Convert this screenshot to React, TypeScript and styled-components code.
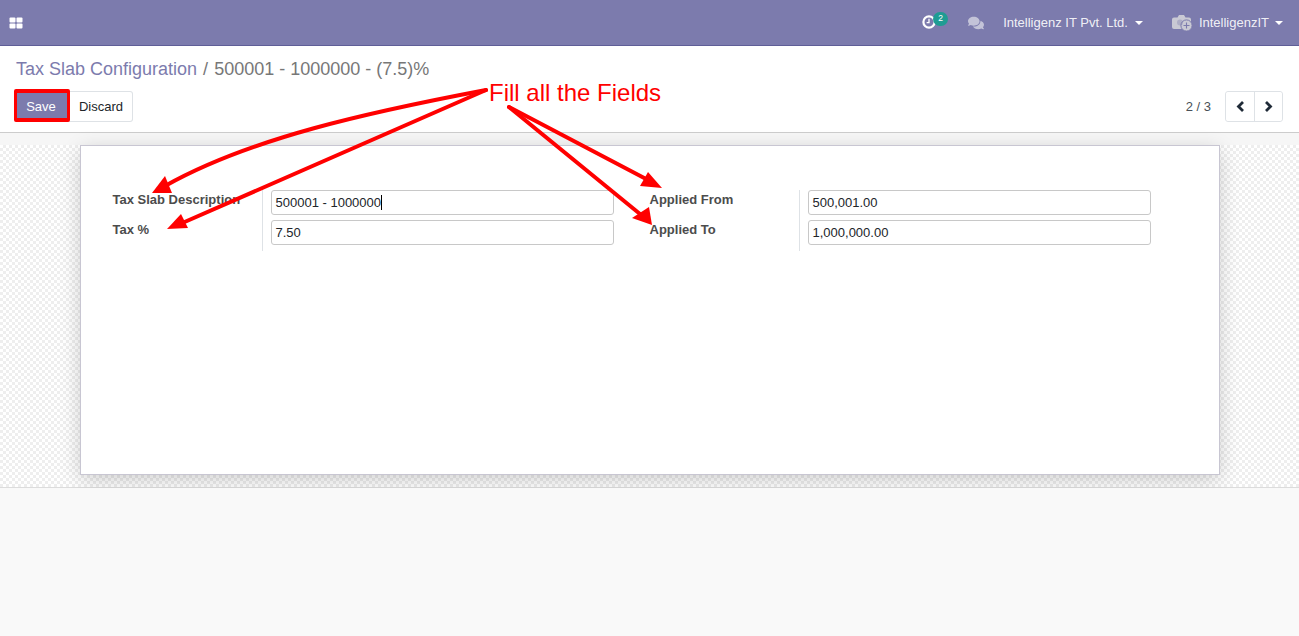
import React from 'react'
import styled, { createGlobalStyle } from 'styled-components'
import { FaComments } from 'react-icons/fa'

const App = () => {
  return (
    <Page>
      <GlobalStyle />
      <Navbar>
        <AppsIcon><GridIcon /></AppsIcon>
        <NavRight>
          <Activity>
            <ClockIcon />
            <Badge>2</Badge>
          </Activity>
          <ChatIcon><FaComments /></ChatIcon>
          <NavItem>Intelligenz IT Pvt. Ltd.<Caret /></NavItem>
          <UserItem>
            <CameraIcon />
            <UserName>IntelligenzIT</UserName>
            <Caret />
          </UserItem>
        </NavRight>
      </Navbar>

      <ControlPanel>
        <Breadcrumb>
          <BreadcrumbLink>Tax Slab Configuration</BreadcrumbLink>
          <BreadcrumbSep>/</BreadcrumbSep>
          <span>500001 - 1000000 - (7.5)%</span>
        </Breadcrumb>
        <ActionRow>
          <Buttons>
            <PrimaryButton>Save</PrimaryButton>
            <SecondaryButton>Discard</SecondaryButton>
          </Buttons>
          <Pager>
            <PagerText>2 / 3</PagerText>
            <PagerGroup>
              <PagerButton><Chevron d="M7 1 2.5 5.5 7 10" /></PagerButton>
              <PagerButton><Chevron d="M2 1l4.5 4.5L2 10" /></PagerButton>
            </PagerGroup>
          </Pager>
        </ActionRow>
      </ControlPanel>

      <FormArea>
        <Sheet>
          <FormGroup>
            <FieldColumn>
              <FieldLabels>
                <FieldLabel>Tax Slab Description</FieldLabel>
                <FieldLabel>Tax %</FieldLabel>
              </FieldLabels>
              <FieldInputs>
                <FieldInput>500001 - 1000000<TextCursor /></FieldInput>
                <FieldInput>7.50</FieldInput>
              </FieldInputs>
            </FieldColumn>
            <FieldColumn>
              <FieldLabels>
                <FieldLabel>Applied From</FieldLabel>
                <FieldLabel>Applied To</FieldLabel>
              </FieldLabels>
              <FieldInputs>
                <FieldInput>500,001.00</FieldInput>
                <FieldInput>1,000,000.00</FieldInput>
              </FieldInputs>
            </FieldColumn>
          </FormGroup>
        </Sheet>
      </FormArea>
      <Chatter />

      <SaveHighlight />
      <AnnotationText>Fill all the Fields</AnnotationText>
      <Arrows viewBox="0 0 1299 636">
        <ArrowLine d="M486 90 C 370 112, 250 138, 165 186" />
        <ArrowHead points="152,193 165,176 172,193" />
        <ArrowLine d="M486 90 L 180 224" />
        <ArrowHead points="167,229 181,214 188,228" />
        <ArrowLine d="M509 107 L 648 180" />
        <ArrowHead points="662,188 648,172 640,186" />
        <ArrowLine d="M509 107 L 640 214" />
        <ArrowHead points="652,225 649,207 632,218" />
      </Arrows>
    </Page>
  )
}

export default App

const GridIcon = () => (
  <svg width="14" height="12" viewBox="0 0 14 12" fill="#fff">
    <rect x="0.5" y="0.5" width="6" height="5" rx="1" />
    <rect x="7.5" y="0.5" width="6" height="5" rx="1" />
    <rect x="0.5" y="6.5" width="6" height="5" rx="1" />
    <rect x="7.5" y="6.5" width="6" height="5" rx="1" />
  </svg>
)

const ClockIcon = () => (
  <svg width="14" height="14" viewBox="0 0 14 14" fill="none">
    <circle cx="7" cy="7" r="5.6" stroke="#fff" strokeWidth="2.2" />
    <path d="M7 3.8V7.6H4.6" stroke="#fff" strokeWidth="1.3" />
  </svg>
)

const CameraIcon = () => (
  <svg width="21" height="18" viewBox="0 0 21 18">
    <path d="M2 3.5h3.5L7 1h5l1.5 2.5H17a2 2 0 0 1 2 2V13a2 2 0 0 1-2 2H2a2 2 0 0 1-2-2V5.5a2 2 0 0 1 2-2z" fill="#c9c9d4" />
    <circle cx="14.5" cy="11.5" r="5.6" fill="#c9c9d4" stroke="#7C7BAD" strokeWidth="1" />
    <path d="M14.5 8.5v6M11.5 11.5h6" stroke="#7C7BAD" strokeWidth="1.1" />
    <circle cx="8" cy="8.5" r="3" fill="#7C7BAD" opacity="0.35" />
  </svg>
)

const Chevron = ({ d }: { d: string }) => (
  <svg width="9" height="11" viewBox="0 0 9 11" fill="none">
    <path d={d} stroke="#1f2a37" strokeWidth="2.8" />
  </svg>
)

const GlobalStyle = createGlobalStyle`
  html, body, #root {
    margin: 0;
    height: 100%;
  }
  body {
    font-family: "Liberation Sans", Arial, sans-serif;
    font-size: 13px;
    color: #212529;
    background: #f9f9f9;
  }
  * {
    box-sizing: border-box;
  }
`

const Page = styled.div`
  position: relative;
  height: 636px;
  overflow: hidden;
  display: flex;
  flex-direction: column;
`

const Navbar = styled.header`
  height: 46px;
  flex: none;
  background: #7c7bad;
  border-bottom: 1px solid #5f5e97;
  display: flex;
  align-items: center;
  justify-content: space-between;
  padding: 0 16px 0 9px;
  color: #fff;
`

const AppsIcon = styled.div`
  display: flex;
  align-items: center;
`

const NavRight = styled.div`
  display: flex;
  align-items: center;
  color: rgba(255, 255, 255, 0.9);
`

const Activity = styled.div`
  position: relative;
  display: flex;
  width: 14px;
  height: 14px;
  margin: -2px 32px 0 0;
`

const Badge = styled.span`
  position: absolute;
  left: 11px;
  top: -3px;
  width: 15px;
  height: 14px;
  border-radius: 7px;
  background: #1f9c93;
  color: #fff;
  font-size: 8.5px;
  line-height: 13px;
  text-align: center;
`

const ChatIcon = styled.div`
  display: flex;
  color: #c3c3d8;
  font-size: 16px;
  margin-right: 19px;
`

const NavItem = styled.div`
  display: flex;
  align-items: center;
  margin-right: 29px;
`

const UserItem = styled.div`
  display: flex;
  align-items: center;
`

const UserName = styled.span`
  margin: 0 -1px 0 6px;
`

const Caret = styled.i`
  display: inline-block;
  margin-left: 7px;
  border-top: 4px solid #fff;
  border-left: 4px solid transparent;
  border-right: 4px solid transparent;
`

const ControlPanel = styled.section`
  height: 87px;
  flex: none;
  background: #fff;
  border-bottom: 1px solid #ccc;
  padding: 10px 16px 0;
`

const Breadcrumb = styled.div`
  font-size: 18px;
  line-height: 26px;
  color: #777;
  display: flex;
`

const BreadcrumbLink = styled.span`
  color: #7c7bad;
`

const BreadcrumbSep = styled.span`
  margin: 0 6px 0 6px;
`

const ActionRow = styled.div`
  display: flex;
  align-items: center;
  justify-content: space-between;
  margin-top: 9px;
`

const Buttons = styled.div`
  display: flex;
`

const PrimaryButton = styled.button`
  width: 52px;
  height: 31px;
  border: 1px solid #7c7bad;
  border-radius: 3px 0 0 3px;
  background: #7c7bad;
  color: #fff;
  font: 13px "Liberation Sans", Arial, sans-serif;
  padding: 0 2px 0 0;
`

const SecondaryButton = styled.button`
  width: 65px;
  height: 31px;
  border: 1px solid #dee2e6;
  border-left: none;
  border-radius: 0 3px 3px 0;
  background: #fff;
  color: #212529;
  font: 13px "Liberation Sans", Arial, sans-serif;
  padding: 0 0 0 2px;
`

const Pager = styled.div`
  display: flex;
  align-items: center;
`

const PagerText = styled.span`
  color: #495057;
  margin-right: 14px;
`

const PagerGroup = styled.div`
  display: flex;
  height: 31px;
  border: 1px solid #dee2e6;
  border-radius: 3px;
`

const PagerButton = styled.button`
  width: 28px;
  border: none;
  background: #fff;
  padding: 0;
  display: flex;
  align-items: center;
  justify-content: center;
  border-radius: 3px;

  & + & {
    border-left: 1px solid #dee2e6;
    border-radius: 0 3px 3px 0;
  }
`

const FormArea = styled.main`
  height: 355px;
  flex: none;
  border-bottom: 1px solid #dcdcdc;
  padding-top: 12px;
  background-color: #fff;
  background-image:
    linear-gradient(#f6f6f6, #f6f6f6),
    conic-gradient(#eeeeee 25%, #fff 0 50%, #eeeeee 0 75%, #fff 0);
  background-size: 100% 12px, 6px 6px;
  background-repeat: no-repeat, repeat;
`

const Sheet = styled.div`
  width: 1140px;
  height: 330px;
  margin: 0 auto;
  background: #fff;
  border: 1px solid #c8c6d2;
  box-shadow: 0 5px 20px -1px rgba(0, 0, 0, 0.2);
  padding: 44px 32px 0;
`

const FormGroup = styled.div`
  display: flex;
  gap: 36px;
`

const FieldColumn = styled.div`
  width: 501px;
  display: flex;
`

const FieldLabels = styled.div`
  width: 150px;
  flex: none;
  border-right: 1px solid #dee2e6;
  display: flex;
  flex-direction: column;
`

const FieldLabel = styled.label`
  height: 30px;
  font-weight: 700;
  color: #4c4c4c;
  line-height: 19px;
`

const FieldInputs = styled.div`
  flex: 1;
  padding-left: 8px;
  display: flex;
  flex-direction: column;
  gap: 5px;
  padding-bottom: 6px;
`

const FieldInput = styled.div`
  height: 25px;
  width: 343px;
  border: 1px solid #c8c8c8;
  border-radius: 3px;
  padding: 0 4px;
  line-height: 23px;
  color: #212529;
  background: #fff;
  display: flex;
  align-items: center;
`

const TextCursor = styled.i`
  width: 1px;
  height: 15px;
  background: #000;
`

const Chatter = styled.div`
  flex: 1;
  background: #f9f9f9;
`

const SaveHighlight = styled.div`
  position: absolute;
  left: 14px;
  top: 89px;
  width: 56px;
  height: 33px;
  border-style: solid;
  border-color: #f00;
  border-width: 4px 3px;
  border-radius: 2px;
`

const AnnotationText = styled.div`
  position: absolute;
  left: 489px;
  top: 79px;
  font-size: 24px;
  line-height: 28px;
  color: #f00;
`

const Arrows = styled.svg`
  position: absolute;
  inset: 0;
  width: 1299px;
  height: 636px;
  pointer-events: none;
`

const ArrowLine = styled.path`
  fill: none;
  stroke: #f00;
  stroke-width: 4;
  stroke-linecap: round;
`

const ArrowHead = styled.polygon`
  fill: #f00;
`
